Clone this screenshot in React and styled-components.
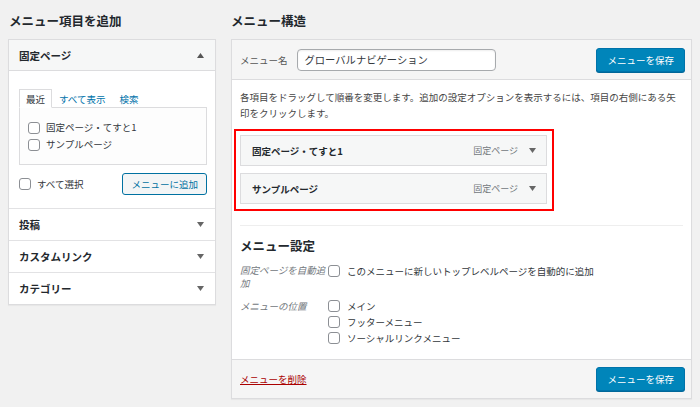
import React from 'react';
import styled, { createGlobalStyle } from 'styled-components';

const Global = createGlobalStyle`
  html, body { margin: 0; padding: 0; background: #f1f1f1; }
  body {
    font-family: "Noto Sans CJK JP", "Noto Sans", sans-serif;
    font-size: 9.5px;
    color: #444;
  }
  * { box-sizing: border-box; }
`;

const Page = styled.div`
  display: flex;
  align-items: flex-start;
  gap: 15px;
  padding: 0 8px;
  width: 700px;
  height: 407px;
  overflow: hidden;
`;

const Column = styled.div`
  display: flex;
  flex-direction: column;
  width: ${p => p.$w}px;
  flex: none;
`;

const Heading = styled.h2`
  margin: 0 0 10px;
  padding: 12px 0 0 ${p => p.$indent || 0}px;
  font-size: 12.5px;
  line-height: 17px;
  font-weight: bold;
  color: #23282d;
`;

const Panel = styled.div`
  background: #fff;
  border: 1px solid #dcdcde;
  box-shadow: 0 1px 1px rgba(0, 0, 0, 0.04);
`;

const Section = styled.div`
  & + & { border-top: 1px solid #e2e2e4; }
`;

const SectionTitle = styled.div`
  display: flex;
  align-items: center;
  justify-content: space-between;
  height: 31px;
  padding: 0 11px 0 10px;
  font-size: 10.5px;
  font-weight: bold;
  color: #23282d;
  background: ${p => (p.$open ? '#f6f7f7' : '#fff')};
  border-bottom: ${p => (p.$open ? '1px solid #dcdcde' : 'none')};
`;

const SectionBody = styled.div`
  padding: 18px 8px 13px 10px;
`;

const TabList = styled.div`
  display: flex;
  height: 19px;
`;

const Tab = styled.div`
  position: relative;
  z-index: 1;
  padding: 0 6px;
  height: 19px;
  line-height: 18px;
  border: 1px solid ${p => (p.$active ? '#dcdcde' : 'transparent')};
  border-bottom-color: ${p => (p.$active ? '#fff' : 'transparent')};
  background: ${p => (p.$active ? '#fff' : 'transparent')};
  color: ${p => (p.$active ? '#32373c' : '#0073aa')};
`;

const TabPanel = styled.div`
  margin-top: -1px;
  border: 1px solid #dcdcde;
  padding: 11px 9px 11px 8px;
  background: #fdfdfd;
`;

const CheckRow = styled.label`
  display: flex;
  align-items: center;
  gap: ${p => p.$gap || 6}px;
  line-height: ${p => p.$lh || 17}px;
  color: #32373c;
`;

const Check = styled.span`
  flex: none;
  width: 12px;
  height: 12px;
  border: 1px solid #8c8f94;
  border-radius: 3px;
  background: #fff;
`;

const ActionRow = styled.div`
  display: flex;
  align-items: center;
  justify-content: space-between;
  margin-top: 8px;
`;

const SecondaryButton = styled.button`
  height: 22px;
  padding: 0 8px;
  border: 1px solid #0071a1;
  border-radius: 3px;
  background: #f3f5f6;
  color: #0071a1;
  font-family: inherit;
  font-size: 9.5px;
  line-height: 20px;
`;

const PrimaryButton = styled.button`
  height: 24px;
  padding: 0 10px;
  border: 1px solid #0073aa;
  border-radius: 3px;
  background: #0085ba;
  box-shadow: 0 1px 0 #006799;
  color: #fff;
  font-family: inherit;
  font-size: 9.5px;
  line-height: 22px;
  margin-left: auto;
`;

const MenuPanel = styled(Panel)`
  display: flex;
  flex-direction: column;
`;

const MenuHeader = styled.div`
  display: flex;
  align-items: center;
  height: 40px;
  padding: 0 6px 0 8px;
  background: #f5f5f5;
  border-bottom: 1px solid #dcdcde;
`;

const NameLabel = styled.span`
  color: #555;
  margin-right: 9px;
`;

const NameInput = styled.div`
  width: 199px;
  height: 22px;
  border: 1px solid #a7aaad;
  border-radius: 4px;
  background: #fff;
  padding: 0 7px;
  font-size: 10.3px;
  line-height: 20px;
  color: #32373c;
  box-shadow: inset 0 1px 2px rgba(0, 0, 0, 0.07);
`;

const MenuBody = styled.div`
  padding: 9px 8px 13px;
`;

const Desc = styled.p`
  margin: 0;
  line-height: 16px;
  color: #444;
`;

const Highlight = styled.div`
  display: flex;
  flex-direction: column;
  gap: 7px;
  width: 320px;
  margin: 8px 0 0 -6px;
  border: 2px solid #f00;
  padding: 4px 5px 5px 4px;
`;

const MenuItem = styled.div`
  display: flex;
  align-items: center;
  height: 31px;
  padding: 0 10px 0 11px;
  border: 1px solid #dcdcde;
  background: #f6f7f7;
`;

const ItemTitle = styled.span`
  flex: 1;
  font-weight: bold;
  color: #23282d;
`;

const ItemType = styled.span`
  font-size: 9px;
  color: #72777c;
  margin-right: 11px;
`;

const Settings = styled.div`
  margin-top: 14px;
  border-top: 1px solid #eee;
  padding-top: 11px;
`;

const SettingsHeading = styled.h3`
  margin: 0;
  font-size: 12.5px;
  line-height: 17px;
  font-weight: bold;
  color: #23282d;
`;

const SettingRow = styled.div`
  display: grid;
  grid-template-columns: 88px 1fr;
  margin-top: ${p => p.$mt}px;
`;

const RowLabel = styled.div`
  font-style: italic;
  color: #72777c;
  line-height: 12.5px;
  padding-top: 1.5px;
`;

const Options = styled.div`
  display: flex;
  flex-direction: column;
`;

const MenuFooter = styled.div`
  display: flex;
  align-items: center;
  height: 39px;
  padding: 0 6px 0 8px;
  background: #f5f5f5;
  border-top: 1px solid #dcdcde;
`;

const DeleteLink = styled.a`
  color: #a00;
  text-decoration: underline;
`;

const Arrow = ({ up, color = '#555' }) => (
  <svg width="7" height="5" viewBox="0 0 7 5" style={{ flex: 'none' }}>
    {up ? <path d="M0 5 L3.5 0 L7 5 Z" fill={color} /> : <path d="M0 0 L7 0 L3.5 5 Z" fill={color} />}
  </svg>
);

const closedSections = ['投稿', 'カスタムリンク', 'カテゴリー'];

export default function App() {
  return (
    <>
      <Global />
      <Page>
        <Column $w={208}>
          <Heading $indent={1}>メニュー項目を追加</Heading>
          <Panel>
            <Section>
              <SectionTitle $open>
                固定ページ
                <Arrow up />
              </SectionTitle>
              <SectionBody>
                <TabList>
                  <Tab $active>最近</Tab>
                  <Tab>すべて表示</Tab>
                  <Tab>検索</Tab>
                </TabList>
                <TabPanel>
                  <CheckRow><Check />固定ページ・てすと1</CheckRow>
                  <CheckRow><Check />サンプルページ</CheckRow>
                </TabPanel>
                <ActionRow>
                  <CheckRow><Check />すべて選択</CheckRow>
                  <SecondaryButton>メニューに追加</SecondaryButton>
                </ActionRow>
              </SectionBody>
            </Section>
            {closedSections.map(s => (
              <Section key={s}>
                <SectionTitle>
                  {s}
                  <Arrow color="#666" />
                </SectionTitle>
              </Section>
            ))}
          </Panel>
        </Column>

        <Column $w={461}>
          <Heading>メニュー構造</Heading>
          <MenuPanel>
            <MenuHeader>
              <NameLabel>メニュー名</NameLabel>
              <NameInput>グローバルナビゲーション</NameInput>
              <PrimaryButton>メニューを保存</PrimaryButton>
            </MenuHeader>
            <MenuBody>
              <Desc>各項目をドラッグして順番を変更します。追加の設定オプションを表示するには、項目の右側にある矢印をクリックします。</Desc>
              <Highlight>
                <MenuItem>
                  <ItemTitle>固定ページ・てすと1</ItemTitle>
                  <ItemType>固定ページ</ItemType>
                  <Arrow color="#666" />
                </MenuItem>
                <MenuItem>
                  <ItemTitle>サンプルページ</ItemTitle>
                  <ItemType>固定ページ</ItemType>
                  <Arrow color="#666" />
                </MenuItem>
              </Highlight>
              <Settings>
                <SettingsHeading>メニュー設定</SettingsHeading>
                <SettingRow $mt={8.5}>
                  <RowLabel>固定ページを自動追加</RowLabel>
                  <Options>
                    <CheckRow $gap={7} $lh={16}><Check />このメニューに新しいトップレベルページを自動的に追加</CheckRow>
                  </Options>
                </SettingRow>
                <SettingRow $mt={9}>
                  <RowLabel>メニューの位置</RowLabel>
                  <Options>
                    <CheckRow $gap={7} $lh={16}><Check />メイン</CheckRow>
                    <CheckRow $gap={7} $lh={16}><Check />フッターメニュー</CheckRow>
                    <CheckRow $gap={7} $lh={16}><Check />ソーシャルリンクメニュー</CheckRow>
                  </Options>
                </SettingRow>
              </Settings>
            </MenuBody>
            <MenuFooter>
              <DeleteLink>メニューを削除</DeleteLink>
              <PrimaryButton>メニューを保存</PrimaryButton>
            </MenuFooter>
          </MenuPanel>
        </Column>
      </Page>
    </>
  );
}
